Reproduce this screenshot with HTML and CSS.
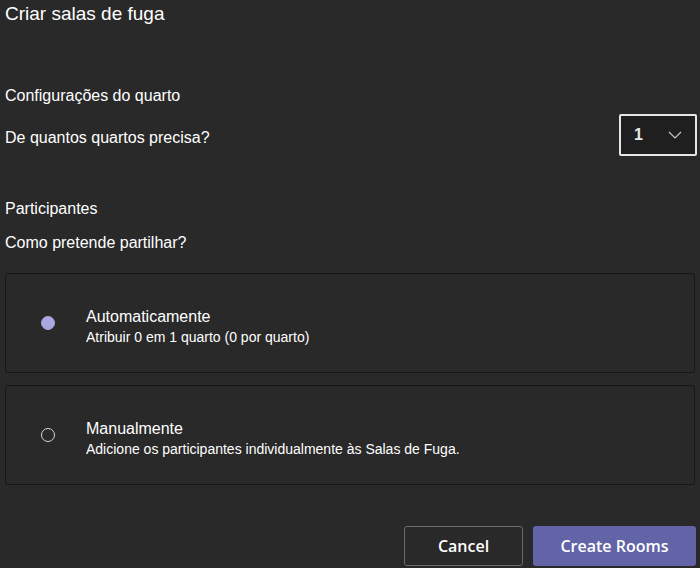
FILE: index.html
```html
<!DOCTYPE html>
<html lang="pt">
<head>
<meta charset="utf-8">
<title>Criar salas de fuga</title>
<link rel="stylesheet" href="styles.css">
</head>
<body>
<div class="dialog">
  <h1 class="title">Criar salas de fuga</h1>
  <section class="rooms">
    <div class="label">Configurações do quarto</div>
    <div class="row">
      <div class="label">De quantos quartos precisa?</div>
      <div class="select">
        <span class="select-value">1</span>
        <svg class="chev" width="14" height="8" viewBox="0 0 14 8"><path d="M1 1 L7 7 L13 1" fill="none" stroke="#c8c8c8" stroke-width="1.2"/></svg>
      </div>
    </div>
  </section>
  <section class="parts">
    <div class="label">Participantes</div>
    <div class="label q">Como pretende partilhar?</div>
  </section>
  <div class="options">
    <div class="card">
      <span class="radio checked"></span>
      <div class="card-text">
        <div class="card-title">Automaticamente</div>
        <div class="card-sub">Atribuir 0 em 1 quarto (0 por quarto)</div>
      </div>
    </div>
    <div class="card">
      <span class="radio"></span>
      <div class="card-text">
        <div class="card-title">Manualmente</div>
        <div class="card-sub">Adicione os participantes individualmente às Salas de Fuga.</div>
      </div>
    </div>
  </div>
  <div class="actions">
    <button class="btn cancel">Cancel</button>
    <button class="btn primary">Create Rooms</button>
  </div>
</div>
</body>
</html>
```
FILE: styles.css
```css
html, body {
  margin: 0;
  padding: 0;
  background: #292929;
}
body {
  width: 700px;
  height: 568px;
  overflow: hidden;
  font-family: "Liberation Sans", Arial, sans-serif;
  color: #ffffff;
}
.dialog {
  padding: 0 4px 0 5px;
}
.title {
  margin: 0;
  padding-top: 3px;
  font-size: 19px;
  font-weight: normal;
  line-height: 22px;
}
.rooms {
  margin-top: 61px;
}
.label {
  font-size: 16px;
  line-height: 20px;
}
.row {
  display: flex;
  align-items: center;
  justify-content: space-between;
  margin-top: 8px;
}
.row .label {
  margin-top: 5px;
}
.select {
  width: 61px;
  height: 38px;
  box-sizing: content-box;
  border: 2px solid #e6e6e6;
  border-radius: 2px;
  background: #1f1f1f;
  display: flex;
  align-items: center;
  justify-content: space-between;
  padding: 0 13px 0 0;
  margin-right: -1px;
}
.select-value {
  font-size: 16px;
  font-weight: bold;
  padding-left: 13px;
  color: #e8e8e8;
}
.parts {
  margin-top: 43px;
}
.parts .q {
  margin-top: 14px;
}
.options {
  margin-top: 20px;
  display: flex;
  flex-direction: column;
  gap: 12px;
}
.card {
  height: 98px;
  border: 1px solid #171717;
  border-radius: 3px;
  background: #292929;
  display: flex;
  align-items: center;
  margin-right: 1px;
}
.radio {
  width: 12px;
  height: 12px;
  border: 1.5px solid #d6d6d6;
  border-radius: 50%;
  margin-left: 35px;
  margin-right: 31px;
  flex: none;
}
.radio.checked {
  border-color: #a9a8e0;
  background: #a9a8e0;
}
.card-text {
  padding-top: 7px;
}
.card-title {
  font-size: 16px;
  line-height: 20px;
}
.card-sub {
  font-size: 14px;
  line-height: 17px;
  margin-top: 2px;
}
.actions {
  display: flex;
  justify-content: flex-end;
  gap: 10px;
  margin-top: 41px;
}
.btn {
  height: 40px;
  border-radius: 3px;
  font-family: "Open Sans", "Noto Sans", sans-serif;
  font-weight: 600;
  font-size: 16px;
  color: #ffffff;
  cursor: pointer;
}
.cancel {
  width: 119px;
  background: #292929;
  border: 1px solid #6b6b6b;
}
.primary {
  width: 163px;
  background: #6264a7;
  border: none;
}
```
